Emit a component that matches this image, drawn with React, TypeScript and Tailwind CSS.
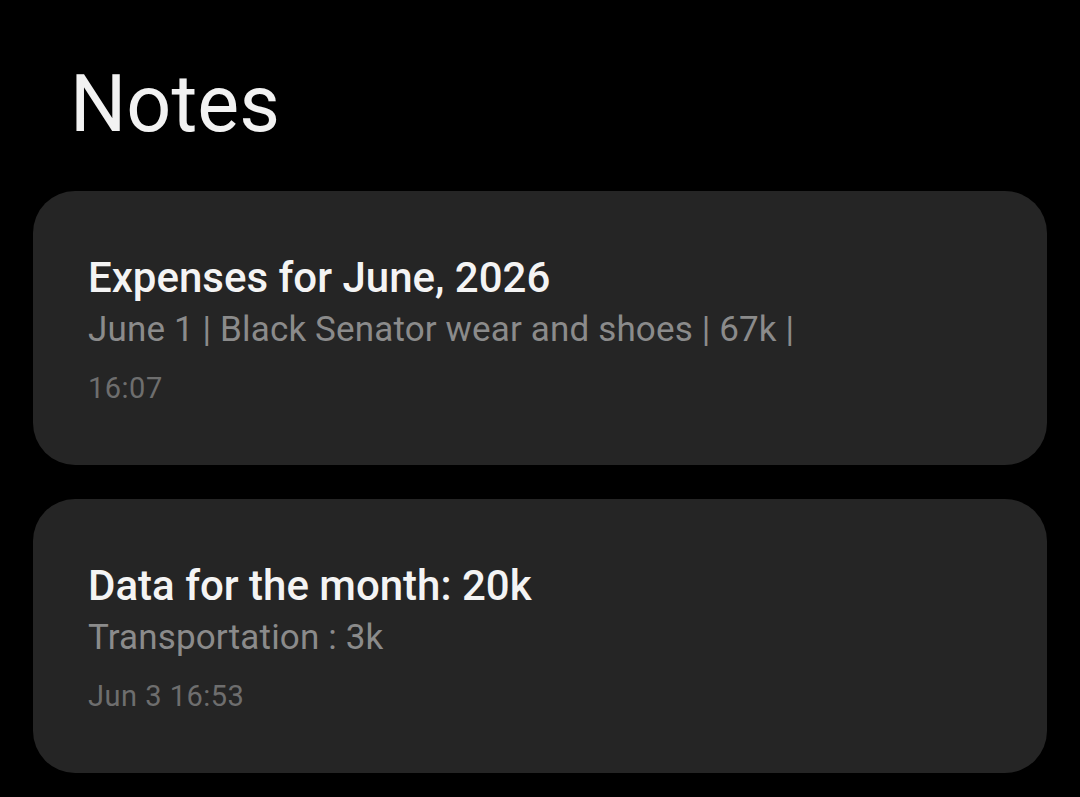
const notes = [
  {
    title: "Expenses for June, 2026",
    preview: "June 1 | Black Senator wear and shoes | 67k |",
    time: "16:07",
  },
  {
    title: "Data for the month: 20k",
    preview: "Transportation : 3k",
    time: "Jun 3 16:53",
  },
];

function NoteCard({ title, preview, time }: { title: string; preview: string; time: string }) {
  return (
    <div className="rounded-[42px] bg-[#252525] pl-[55px] pr-[54px] pt-[61px] pb-[57px]">
      <div className="text-[42px] leading-[52px] font-medium text-[#f4f4f4] truncate">{title}</div>
      <div className="mt-[1px] text-[35px] leading-[50px] tracking-[0.15px] text-[#8b8b8b] truncate">
        {preview}
      </div>
      <div className="mt-[13px] text-[29px] leading-[40px] tracking-[0.5px] text-[#6e6e6e]">{time}</div>
    </div>
  );
}

export default function App() {
  return (
    <div
      className="min-h-[797px] w-full bg-black pb-8"
      style={{ fontFamily: "Roboto, 'Noto Sans', sans-serif" }}
    >
      <h1 className="pl-[70px] pt-[59px] text-[79px] leading-[90px] font-normal text-[#f2f2f2]">
        Notes
      </h1>
      <div className="mx-[33px] mt-[42px] flex flex-col gap-[34px]">
        {notes.map((n) => (
          <NoteCard key={n.title} {...n} />
        ))}
      </div>
    </div>
  );
}
